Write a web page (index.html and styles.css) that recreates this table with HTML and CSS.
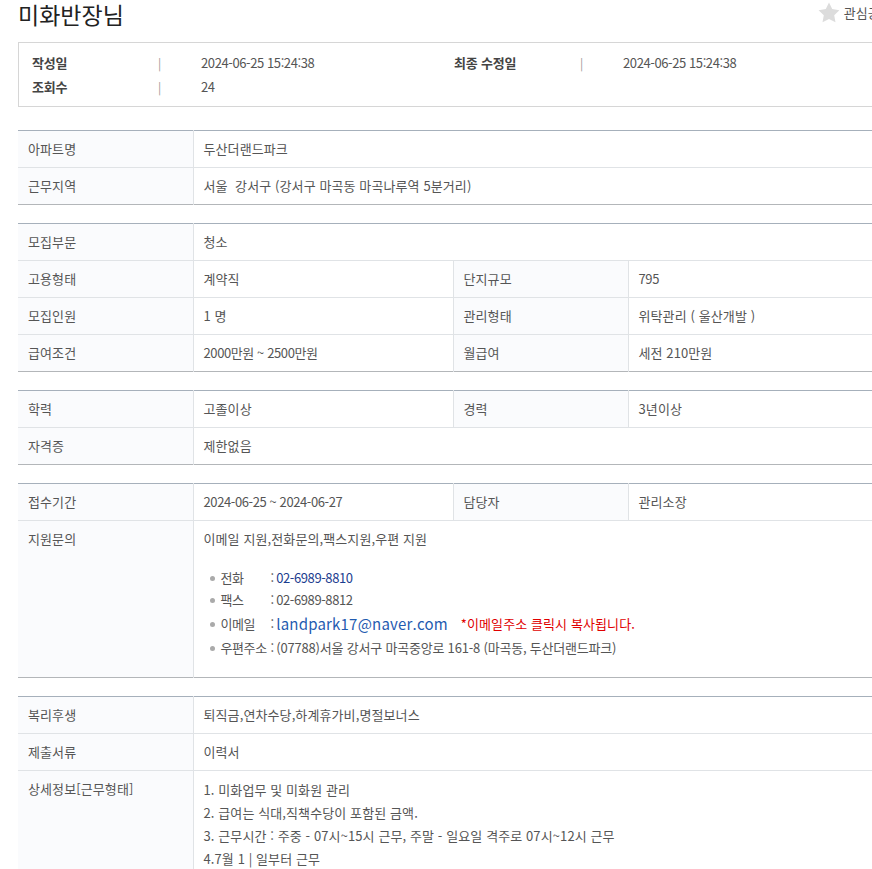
FILE: index.html
```html
<!DOCTYPE html>
<html lang="ko">
<head>
<meta charset="utf-8">
<title>미화반장님</title>
<link rel="stylesheet" href="styles.css">
</head>
<body>
<div class="page">
  <div class="head">
    <h1 class="title">미화반장님</h1>
    <div class="fav">
      <svg class="star" width="22" height="21" viewBox="0 0 24 23"><path d="M12 0.6l3.5 7.2 7.9 1.1-5.7 5.5 1.4 7.8L12 18.5l-7.1 3.7 1.4-7.8L0.6 8.9l7.9-1.1z" fill="#dcdcdc"/></svg>
      <span class="fav-text">관심공고</span>
    </div>
  </div>

  <div class="meta">
    <span class="meta-label">작성일</span><span class="meta-sep">|</span><span class="meta-value num">2024-06-25 15:24:38</span>
    <span class="meta-label">최종 수정일</span><span class="meta-sep">|</span><span class="meta-value num">2024-06-25 15:24:38</span>
    <span class="meta-label">조회수</span><span class="meta-sep">|</span><span class="meta-value num">24</span>
  </div>

  <table class="info first">
    <colgroup><col class="c1"><col class="c2"><col class="c3"><col class="c4"></colgroup>
    <tr><th>아파트명</th><td colspan="3">두산더랜드파크</td></tr>
    <tr><th>근무지역</th><td colspan="3">서울&nbsp; 강서구 (강서구 마곡동 마곡나루역 5분거리)</td></tr>
  </table>

  <table class="info">
    <colgroup><col class="c1"><col class="c2"><col class="c3"><col class="c4"></colgroup>
    <tr><th>모집부문</th><td colspan="3">청소</td></tr>
    <tr><th>고용형태</th><td>계약직</td><th>단지규모</th><td class="num">795</td></tr>
    <tr><th>모집인원</th><td>1 명</td><th>관리형태</th><td>위탁관리 ( 울산개발 )</td></tr>
    <tr><th>급여조건</th><td class="num">2000만원 ~ 2500만원</td><th>월급여</th><td>세전 210만원</td></tr>
  </table>

  <table class="info">
    <colgroup><col class="c1"><col class="c2"><col class="c3"><col class="c4"></colgroup>
    <tr><th>학력</th><td>고졸이상</td><th>경력</th><td>3년이상</td></tr>
    <tr><th>자격증</th><td colspan="3">제한없음</td></tr>
  </table>

  <table class="info">
    <colgroup><col class="c1"><col class="c2"><col class="c3"><col class="c4"></colgroup>
    <tr><th>접수기간</th><td class="num">2024-06-25 ~ 2024-06-27</td><th>담당자</th><td>관리소장</td></tr>
    <tr class="tall">
      <th>지원문의</th>
      <td colspan="3">
        <div>이메일 지원,전화문의,팩스지원,우편 지원</div>
        <ul class="contact">
          <li><span class="ck">전화</span><span class="colon">:</span><span class="blue num">02-6989-8810</span></li>
          <li><span class="ck">팩스</span><span class="colon">:</span><span class="num">02-6989-8812</span></li>
          <li class="mail"><span class="ck">이메일</span><span class="colon">:</span><span class="email">landpark17@naver.com</span><span class="note">*이메일주소 클릭시 복사됩니다.</span></li>
          <li><span class="ck">우편주소</span><span class="colon">:</span><span class="addr">(07788)서울 강서구 마곡중앙로 161-8 (마곡동, 두산더랜드파크)</span></li>
        </ul>
      </td>
    </tr>
  </table>

  <table class="info">
    <colgroup><col class="c1"><col class="c2"><col class="c3"><col class="c4"></colgroup>
    <tr><th>복리후생</th><td colspan="3">퇴직금,연차수당,하계휴가비,명절보너스</td></tr>
    <tr><th>제출서류</th><td colspan="3">이력서</td></tr>
    <tr class="tall">
      <th>상세정보[근무형태]</th>
      <td colspan="3" class="detail">1. 미화업무 및 미화원 관리<br>2. 급여는 식대,직책수당이 포함된 금액.<br>3. 근무시간 : 주중 - 07시~15시 근무, 주말 - 일요일 격주로 07시~12시 근무<br>4.7월 1 | 일부터 근무<br>&nbsp;</td>
    </tr>
  </table>
</div>
</body>
</html>
```

FILE: styles.css
```css
html, body {
  margin: 0;
  padding: 0;
  overflow: hidden;
  background: #fff;
}
body {
  font-family: "Noto Sans CJK KR", "Noto Sans", sans-serif;
  font-size: 13px;
  color: #555;
  letter-spacing: 0.1px;
}
.num { letter-spacing: -0.4px; }
.page {
  width: 900px;
  padding-left: 18px;
}
.head {
  display: flex;
  justify-content: space-between;
  align-items: flex-start;
  height: 42px;
}
.title {
  margin: 0;
  font-size: 23px;
  font-weight: 400;
  line-height: 30px;
  margin-top: -1px;
  color: #222;
  letter-spacing: 0;
}
.fav {
  display: flex;
  align-items: center;
  gap: 4px;
  margin-right: 26px;
  margin-top: 2px;
}
.star { display: block; }
.fav-text { color: #555; font-size: 13px; }

.meta {
  border: 1px solid #d6d6d6;
  padding: 8px 0 7px 13px;
  display: grid;
  grid-template-columns: 126px 43px 253px 126px 43px 1fr;
  line-height: 24px;
}
.meta-label {
  font-weight: 700;
  color: #444;
  letter-spacing: -0.2px;
}
.meta-sep { color: #999; font-size: 12px; }
.meta-value { color: #555; }

.info {
  width: 900px;
  border-collapse: collapse;
  table-layout: fixed;
  margin-top: 18px;
  border-top: 1px solid #a6b0bb;
  border-bottom: 1px solid #b3b6b9;
}
.info.first { margin-top: 23px; }
.c1 { width: 175px; }
.c2 { width: 260px; }
.c3 { width: 175px; }
.c4 { width: 290px; }
.info th, .info td {
  height: 37px;
  padding: 0 10px;
  line-height: 18px;
  text-align: left;
  font-weight: 400;
  vertical-align: middle;
  border-top: 1px solid #e0e3e6;
  border-right: 1px solid #e0e3e6;
  box-sizing: border-box;
}
.info tr:first-child th, .info tr:first-child td { border-top: none; }
.info th {
  background: #fafbfd;
  color: #555;
}
.info td { color: #555; }
.info tr.tall th, .info tr.tall td {
  vertical-align: top;
  padding-top: 9px;
}
.contact {
  list-style: none;
  margin: 19px 0 18px;
  padding: 0 0 0 6px;
}
.contact li {
  line-height: 22px;
  display: flex;
  align-items: center;
  white-space: nowrap;
}
.contact li::before {
  content: "";
  width: 5px;
  height: 5px;
  border-radius: 50%;
  background: #aaa;
  margin-right: 6px;
  flex: none;
}
.contact li.mail { line-height: 26px; }
.ck {
  flex: none;
  min-width: 50px;
  letter-spacing: -0.4px;
}
.colon { flex: none; margin-right: 2px; }
.addr { letter-spacing: -0.2px; }
.blue { color: #1c3d8f; }
.email {
  font-size: 15px;
  color: #1f5bb0;
  letter-spacing: 0.2px;
  margin-right: 13px;
}
.note { color: #e00000; }
.info tr.tall td.detail {
  line-height: 23px;
  padding-top: 7px;
}
```
